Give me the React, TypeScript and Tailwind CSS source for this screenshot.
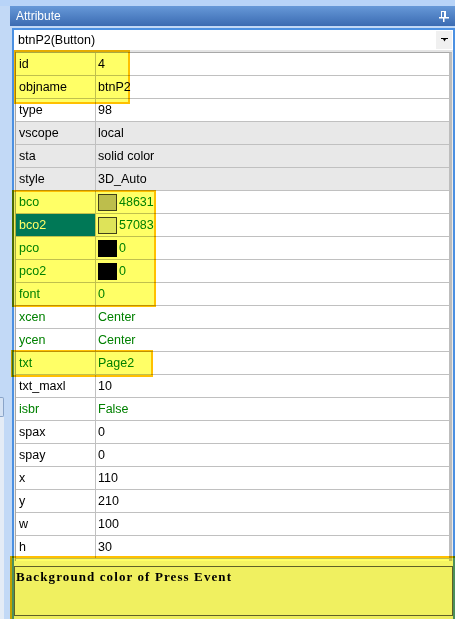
import React from "react";

type Row = {
  name: string;
  value: string;
  green?: boolean;
  gray?: boolean;
  selected?: boolean;
  swatch?: string;
};

const rows: Row[] = [
  { name: "id", value: "4" },
  { name: "objname", value: "btnP2" },
  { name: "type", value: "98" },
  { name: "vscope", value: "local", gray: true },
  { name: "sta", value: "solid color", gray: true },
  { name: "style", value: "3D_Auto", gray: true },
  { name: "bco", value: "48631", green: true, swatch: "bg-[#bdbebd] border-[#404040]" },
  { name: "bco2", value: "57083", green: true, selected: true, swatch: "bg-[#dee3de] border-[#404040]" },
  { name: "pco", value: "0", green: true, swatch: "bg-black border-black" },
  { name: "pco2", value: "0", green: true, swatch: "bg-black border-black" },
  { name: "font", value: "0", green: true },
  { name: "xcen", value: "Center", green: true },
  { name: "ycen", value: "Center", green: true },
  { name: "txt", value: "Page2", green: true },
  { name: "txt_maxl", value: "10" },
  { name: "isbr", value: "False", green: true },
  { name: "spax", value: "0" },
  { name: "spay", value: "0" },
  { name: "x", value: "110" },
  { name: "y", value: "210" },
  { name: "w", value: "100" },
  { name: "h", value: "30" },
];

function PinIcon() {
  return (
    <svg width="10" height="11" viewBox="0 0 10 11" className="block">
      <rect x="2.5" y="0.5" width="4" height="6" fill="none" stroke="white" strokeWidth="1" />
      <rect x="5" y="0" width="2" height="7" fill="white" />
      <rect x="0" y="6" width="10" height="1.5" fill="white" />
      <rect x="4" y="7" width="1.5" height="4" fill="white" />
    </svg>
  );
}

function PropRow({ row }: { row: Row }) {
  const text = row.green ? "text-[#008000]" : "text-black";
  return (
    <div
      className={`grid grid-cols-[80px_1fr] h-[23px] border-b border-[#c0c0c0] ${
        row.gray ? "bg-[#e8e8e8]" : "bg-white"
      }`}
    >
      <div
        className={`flex items-center pl-[3px] border-r border-[#c0c0c0] ${
          row.selected ? "bg-[#0078d7] text-white" : text
        }`}
      >
        {row.name}
      </div>
      <div className={`flex items-center pl-[2px] gap-[2px] ${text}`}>
        {row.swatch && <span className={`w-[19px] h-[17px] border ${row.swatch}`} />}
        <span>{row.value}</span>
      </div>
    </div>
  );
}

export default function App() {
  return (
    <div className="relative w-[455px] h-[619px] overflow-hidden bg-[#c2d9f6] font-['Liberation_Sans',Arial,sans-serif] text-[12.5px] leading-none">
      <div className="h-[6px] bg-[#b8d4f8]" />
      <div className="flex">
        <div className="w-[10px] shrink-0 h-[620px] flex flex-col">
          <div className="h-[391px]" />
          <div className="h-[20px] w-[4px] border border-l-0 border-[#8aa4c8] rounded-r-[2px] bg-[#d4e2f4]" />
          <div className="flex-1 w-[4px] bg-[#e4ecf6]" />
        </div>
        <div className="flex-1 flex flex-col">
          <div className="h-[20px] bg-gradient-to-b from-[#6799d8] to-[#3b6bb2] flex items-center justify-between pl-[6px] pr-[6px] text-white text-[12px]">
            <span>Attribute</span>
            <PinIcon />
          </div>
          <div className="h-[2px]" />
          <div className="ml-[2px] border-2 border-b-0 border-[#4b90e2] bg-[#ececec] h-[600px] flex flex-col">
            <div className="h-[20px] bg-white flex items-center justify-between pl-[4px]">
              <span>btnP2(Button)</span>
              <div className="w-[16px] h-[18px] mr-[1px] bg-[#f0f0f0] flex items-center justify-center">
                <svg width="7" height="4" viewBox="0 0 7 4">
                  <polygon points="0,0 7,0 7,1 5,1 3.5,3.5 2,1 0,1" fill="black" />
                </svg>
              </div>
            </div>
            <div className="h-[2px] bg-[#e4e4e4]" />
            <div className="ml-[1px] mr-[1px] border-l border-t border-r-[3px] border-r-[#bdbdbd] border-[#a8a8a8] bg-white">
              {rows.map((r) => (
                <PropRow key={r.name} row={r} />
              ))}
              <div className="h-[2px]" />
            </div>
            <div className="h-[5px] bg-[#f4f4f4]" />
            <div className="h-[50px] border border-[#606060] bg-[#f0f0f0] pl-[1px] pt-[3px] font-['Liberation_Serif',serif] font-bold text-[13px] tracking-[1.1px] text-black">
              Background color of Press Event
            </div>
          </div>
        </div>
      </div>

      {/* annotation highlights */}
      <div className="absolute left-[14px] top-[50px] w-[116px] h-[54px] border-2 border-[#ffc000] bg-[#ffff66] mix-blend-multiply" />
      <div className="absolute left-[12px] top-[190px] w-[144px] h-[117px] border-2 border-[#ffc000] bg-[#ffff66] mix-blend-multiply" />
      <div className="absolute left-[11px] top-[350px] w-[142px] h-[27px] border-2 border-[#ffc000] bg-[#ffff66] mix-blend-multiply" />
      <div className="absolute left-[10px] top-[556px] w-[450px] h-[70px] border-2 border-[#ffc000] bg-[#ffff66] mix-blend-multiply" />
    </div>
  );
}
